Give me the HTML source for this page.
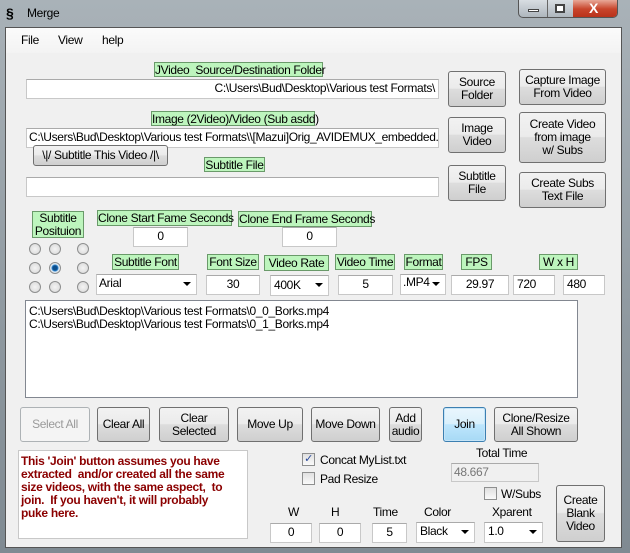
<!DOCTYPE html>
<html><head><style>
body{margin:0;width:630px;height:553px;overflow:hidden;background:#8c969e;font-family:"Liberation Sans",sans-serif;font-size:12px;letter-spacing:-0.35px;color:#000;position:relative}
div,span{position:absolute;box-sizing:border-box}
.tb{background:linear-gradient(#a9b2b8,#8e989f 60%,#7f8a92);left:0;top:0;width:630px;height:553px}
.client{left:5px;top:27px;width:617px;height:521px;background:#f0f0f0;border:1px solid #555}
.menu{left:0;top:0;width:615px;height:25px;background:linear-gradient(#fbfbfb,#f3f3f3)}
.lbl{background:#bdf5bd;border:1px solid #6a9a6a;font-size:12px;line-height:14px;text-align:center;white-space:nowrap}
.tx{background:#fff;border:1px solid #c8c8c8;border-top-color:#aaa;line-height:17px;padding:0 3px;white-space:nowrap;overflow:hidden;font-size:12px}
.c{text-align:center}
.btn{border:1px solid #707070;border-radius:3px;background:linear-gradient(#f2f2f2 0%,#ebebeb 48%,#dddddd 50%,#cfcfcf 100%);text-align:center;display:flex;align-items:center;justify-content:center;line-height:13px;font-size:12px}
.rad{width:12px;height:12px;border-radius:50%;border:1px solid #8e8f8f;background:radial-gradient(#f4f4f4,#d6d6d6)}
.arr{right:5px;top:7px;width:0;height:0;border-left:4px solid transparent;border-right:4px solid transparent;border-top:4px solid #000}
.cb{width:13px;height:13px;border:1px solid #8e8f8f;background:linear-gradient(#e0e0e0,#fafafa)}
</style></head><body>
<div class="tb"></div>
<div style="left:6px;top:5px;width:10px;height:16px;font-weight:bold;font-size:14px;line-height:16px;color:#000">§</div>
<div style="left:27px;top:6px;font-size:12px">Merge</div>
<div style="left:518px;top:0;width:100px;height:18px;border:1px solid #555;border-top:none;border-radius:0 0 5px 5px;background:linear-gradient(#d8dde2,#aeb6bd);overflow:hidden">
 <div style="left:28px;top:0;width:1px;height:18px;background:#666"></div>
 <div style="left:54px;top:0;width:46px;height:18px;background:linear-gradient(#e8a898,#c8452c 50%,#b83018)"></div>
 <div style="left:9px;top:9px;width:11px;height:3px;background:#fff;border:1px solid #444"></div>
 <div style="left:36px;top:4px;width:10px;height:9px;border:2px solid #444;background:#fff"></div>
 <div style="left:70px;top:0;color:#fff;font-weight:bold;font-size:14px;line-height:17px">X</div>
</div>
<div class="client">
<div class="menu"><span style="left:15px;top:5px">File</span><span style="left:52px;top:5px">View</span><span style="left:96px;top:5px">help</span></div>
</div>
<div class="lbl" style="left:154px;top:62px;width:169px;height:15px">JVideo&nbsp; Source/Destination Folder</div>
<div class="tx" style="left:26px;top:79px;width:413px;height:20px;text-align:right">C:\Users\Bud\Desktop\Various test Formats\</div>
<div class="btn" style="left:448px;top:71px;width:58px;height:36px">Source<br>Folder</div>
<div class="btn" style="left:519px;top:69px;width:87px;height:36px">Capture Image<br>From Video</div>
<div class="lbl" style="left:151px;top:111px;width:164px;height:15px">Image (2Video)/Video (Sub asdd)</div>
<div class="tx" style="left:26px;top:128px;width:413px;height:20px;padding-left:2px">C:\Users\Bud\Desktop\Various test Formats\\[Mazui]Orig_AVIDEMUX_embedded.mp</div>
<div class="btn" style="left:448px;top:117px;width:58px;height:36px">Image<br>Video</div>
<div class="btn" style="left:519px;top:112px;width:87px;height:51px">Create Video<br>from image<br>w/ Subs</div>
<div class="btn" style="left:33px;top:145px;width:135px;height:21px">\|/ Subtitle This Video /|\</div>
<div class="lbl" style="left:204px;top:157px;width:61px;height:15px">Subtitle File</div>
<div class="tx" style="left:26px;top:177px;width:413px;height:20px"></div>
<div class="btn" style="left:448px;top:165px;width:58px;height:36px">Subtitle<br>File</div>
<div class="btn" style="left:519px;top:172px;width:87px;height:36px">Create Subs<br>Text File</div>
<div class="lbl" style="left:32px;top:211px;width:52px;height:27px;line-height:13px">Subtitle<br>Posituion</div>
<div class="lbl" style="left:97px;top:210px;width:135px;height:16px">Clone Start Fame Seconds</div>
<div class="lbl" style="left:238px;top:211px;width:134px;height:16px">Clone End Frame Seconds</div>
<div class="tx c" style="left:133px;top:227px;width:55px;height:20px">0</div>
<div class="tx c" style="left:282px;top:227px;width:55px;height:20px">0</div>
<div class="rad" style="left:29px;top:243px"></div><div class="rad" style="left:49px;top:243px"></div><div class="rad" style="left:77px;top:243px"></div>
<div class="rad" style="left:29px;top:262px"></div><div class="rad" style="left:49px;top:262px;background:radial-gradient(#0a4d8c 30%,#3a90d8 45%,#dfe8f0 55%)"></div><div class="rad" style="left:77px;top:262px"></div>
<div class="rad" style="left:29px;top:281px"></div><div class="rad" style="left:49px;top:281px"></div><div class="rad" style="left:77px;top:281px"></div>
<div class="lbl" style="left:112px;top:254px;width:67px;height:16px">Subtitle Font</div>
<div class="lbl" style="left:207px;top:254px;width:52px;height:16px">Font Size</div>
<div class="lbl" style="left:264px;top:255px;width:65px;height:16px">Video Rate</div>
<div class="lbl" style="left:335px;top:254px;width:60px;height:16px">Video Time</div>
<div class="lbl" style="left:404px;top:254px;width:39px;height:16px">Format</div>
<div class="lbl" style="left:461px;top:254px;width:31px;height:16px">FPS</div>
<div class="lbl" style="left:539px;top:254px;width:39px;height:16px">W x H</div>
<div class="tx" style="left:96px;top:274px;width:101px;height:21px;padding-left:2px">Arial<div class="arr"></div></div>
<div class="tx c" style="left:206px;top:275px;width:54px;height:20px">30</div>
<div class="tx" style="left:270px;top:275px;width:59px;height:21px;padding-left:3px;line-height:19px">400K<div class="arr"></div></div>
<div class="tx c" style="left:338px;top:275px;width:55px;height:20px">5</div>
<div class="tx" style="left:400px;top:274px;width:46px;height:21px;padding-left:2px;line-height:14px">.MP4<div class="arr"></div></div>
<div class="tx c" style="left:451px;top:275px;width:58px;height:20px">29.97</div>
<div class="tx" style="left:513px;top:275px;width:42px;height:20px">720</div>
<div class="tx" style="left:563px;top:275px;width:42px;height:20px">480</div>
<div class="tx" style="left:25px;top:300px;width:553px;height:98px;line-height:13px;padding-top:4px;border-color:#828790">C:\Users\Bud\Desktop\Various test Formats\0_0_Borks.mp4<br>C:\Users\Bud\Desktop\Various test Formats\0_1_Borks.mp4</div>
<div class="btn" style="left:20px;top:407px;width:70px;height:35px;background:#f4f4f4;border-color:#adb2b5;color:#9a9a9a">Select All</div>
<div class="btn" style="left:97px;top:407px;width:53px;height:35px">Clear All</div>
<div class="btn" style="left:159px;top:407px;width:70px;height:35px">Clear<br>Selected</div>
<div class="btn" style="left:237px;top:407px;width:66px;height:35px">Move Up</div>
<div class="btn" style="left:311px;top:407px;width:69px;height:35px">Move Down</div>
<div class="btn" style="left:389px;top:407px;width:33px;height:35px">Add<br>audio</div>
<div class="btn" style="left:443px;top:407px;width:43px;height:35px;border-color:#3c7fb1;background:linear-gradient(#eaf6fd,#d9f0fc 48%,#bee6fd 50%,#a7d9f5);box-shadow:inset 0 0 0 1px #c5e4f7">Join</div>
<div class="btn" style="left:494px;top:407px;width:84px;height:35px">Clone/Resize<br>All Shown</div>
<div style="left:18px;top:450px;width:230px;height:89px;background:#fff;border:1px solid #c8c8c8;color:#8b0000;font-weight:bold;font-size:12px;letter-spacing:-0.3px;line-height:13px;padding:4px 12px 0 2px">This 'Join' button assumes you have extracted&nbsp; and/or created all the same size videos, with the same aspect,&nbsp; to join.&nbsp; If you haven't, it will probably puke here.</div>
<div class="cb" style="left:302px;top:453px;color:#2a4a9a;font-size:11px;line-height:11px;text-align:center">✓</div>
<span style="left:320px;top:453px">Concat MyList.txt</span>
<div class="cb" style="left:302px;top:472px"></div>
<span style="left:320px;top:472px">Pad Resize</span>
<span style="left:476px;top:446px">Total Time</span>
<div class="tx" style="left:451px;top:463px;width:88px;height:19px;background:#f0f0f0;color:#777;padding-left:2px">48.667</div>
<div class="cb" style="left:484px;top:487px"></div>
<span style="left:501px;top:487px">W/Subs</span>
<div class="btn" style="left:556px;top:485px;width:49px;height:57px">Create<br>Blank<br>Video</div>
<span style="left:288px;top:505px">W</span>
<span style="left:331px;top:505px">H</span>
<span style="left:373px;top:505px">Time</span>
<span style="left:424px;top:505px">Color</span>
<span style="left:492px;top:505px">Xparent</span>
<div class="tx c" style="left:270px;top:523px;width:42px;height:20px">0</div>
<div class="tx c" style="left:319px;top:523px;width:42px;height:20px">0</div>
<div class="tx c" style="left:372px;top:523px;width:35px;height:20px">5</div>
<div class="tx" style="left:416px;top:522px;width:59px;height:21px;padding-left:3px">Black<div class="arr"></div></div>
<div class="tx" style="left:484px;top:522px;width:59px;height:21px;padding-left:3px">1.0<div class="arr"></div></div>
</body></html>
